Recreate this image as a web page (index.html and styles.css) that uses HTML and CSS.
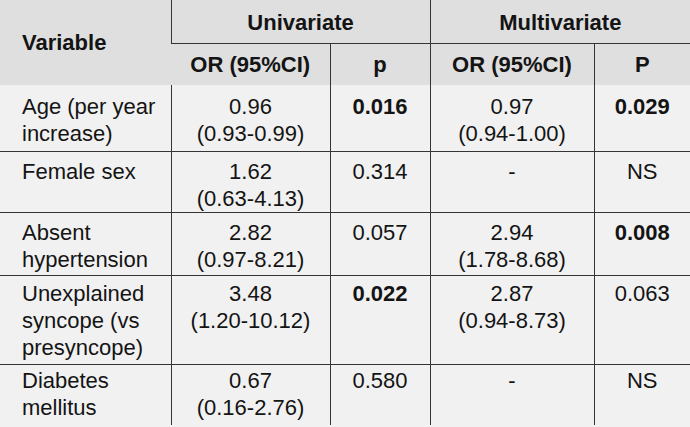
FILE: index.html
```html
<!DOCTYPE html>
<html>
<head>
<meta charset="utf-8">
<link rel="stylesheet" href="styles.css">
</head>
<body>
<table class="or-table">
  <colgroup>
    <col class="c-var">
    <col class="c-or1">
    <col class="c-p1">
    <col class="c-or2">
    <col class="c-p2">
  </colgroup>
  <thead>
    <tr class="h1">
      <th rowspan="2" class="var-head">Variable</th>
      <th colspan="2" class="group">Univariate</th>
      <th colspan="2" class="group">Multivariate</th>
    </tr>
    <tr class="h2">
      <th class="sub grp-start">OR (95%CI)</th>
      <th class="sub">p</th>
      <th class="sub grp-start">OR (95%CI)</th>
      <th class="sub">P</th>
    </tr>
  </thead>
  <tbody>
    <tr class="r-age">
      <td class="name">Age (per year<br>increase)</td>
      <td class="grp-start">0.96<br>(0.93-0.99)</td>
      <td class="sig">0.016</td>
      <td class="grp-start">0.97<br>(0.94-1.00)</td>
      <td class="sig">0.029</td>
    </tr>
    <tr class="r-sex">
      <td class="name">Female sex</td>
      <td class="grp-start">1.62<br>(0.63-4.13)</td>
      <td>0.314</td>
      <td class="grp-start">-</td>
      <td>NS</td>
    </tr>
    <tr class="r-htn">
      <td class="name">Absent<br>hypertension</td>
      <td class="grp-start">2.82<br>(0.97-8.21)</td>
      <td>0.057</td>
      <td class="grp-start">2.94<br>(1.78-8.68)</td>
      <td class="sig">0.008</td>
    </tr>
    <tr class="r-syn">
      <td class="name">Unexplained<br>syncope (vs<br>presyncope)</td>
      <td class="grp-start">3.48<br>(1.20-10.12)</td>
      <td class="sig">0.022</td>
      <td class="grp-start">2.87<br>(0.94-8.73)</td>
      <td>0.063</td>
    </tr>
    <tr class="r-dm">
      <td class="name">Diabetes<br>mellitus</td>
      <td class="grp-start">0.67<br>(0.16-2.76)</td>
      <td>0.580</td>
      <td class="grp-start">-</td>
      <td>NS</td>
    </tr>
  </tbody>
</table>
</body>
</html>
```

FILE: styles.css
```css
html, body {
  margin: 0;
  padding: 0;
  background: #f1f1f1;
}

.or-table {
  width: 690px;
  table-layout: fixed;
  border-collapse: collapse;
  font-family: "Liberation Sans", Arial, Helvetica, sans-serif;
  font-size: 22px;
  line-height: 27px;
  color: #141414;
}

.c-var { width: 171px; }
.c-or1 { width: 159px; }
.c-p1 { width: 100px; }
.c-or2 { width: 164px; }
.c-p2 { width: 96px; }

.or-table th,
.or-table td {
  padding: 0;
  border-left: 1.5px solid #353535;
}

.or-table th:first-child,
.or-table td:first-child {
  border-left: none;
}

/* header */
.or-table thead {
  background: #dfdfdf;
}

.or-table th {
  font-weight: bold;
  text-align: center;
  vertical-align: middle;
}

.h1 { height: 43px; }
.h2 { height: 42px; }

.h1 th { padding-top: 3px; }

.var-head {
  text-align: left !important;
  padding-left: 22px !important;
  padding-top: 0 !important;
}

.h1 .group {
  border-bottom: 1.5px solid #353535;
}

.h2 .sub {
  padding-top: 1px;
}

/* body */
.or-table tbody td {
  text-align: center;
  vertical-align: top;
  padding-top: 6px;
  border-top: 1.5px solid #353535;
}

.or-table tbody tr:first-child td {
  border-top: none;
  padding-top: 8px;
}

.or-table tbody td.name {
  text-align: left;
  padding-left: 22px;
}

.or-table td.sig {
  font-weight: bold;
}

.r-age { height: 66px; }
.r-sex { height: 61px; }
.r-htn { height: 63px; }
.r-syn { height: 89px; }
.r-dm { height: 61px; }

.r-syn td { padding-top: 4px !important; }
.r-dm td { padding-top: 2px !important; }
```
